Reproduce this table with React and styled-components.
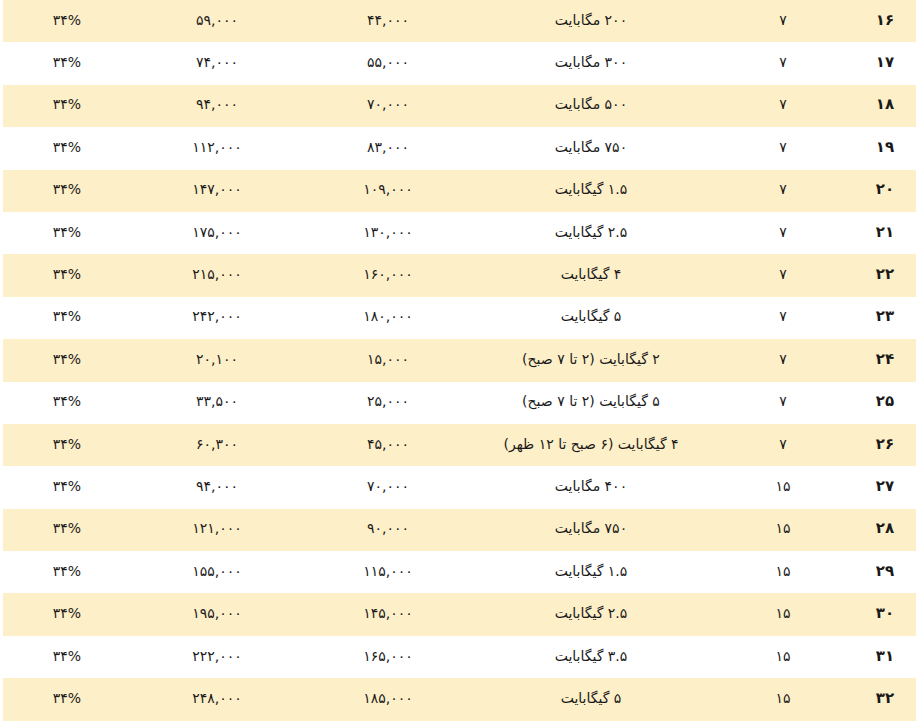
import styled, { createGlobalStyle } from "styled-components";

const GlobalStyle = createGlobalStyle`
  body {
    margin: 0;
    background: #ffffff;
    font-family: "DejaVu Sans", "Noto Sans", sans-serif;
  }
`;

const Table = styled.table`
  direction: rtl;
  width: 910px;
  margin-left: 3px;
  border-collapse: collapse;
  table-layout: fixed;
  color: #1a1a1a;
  font-size: 14px;
`;

const Row = styled.tr`
  height: 42.4px;
  background: ${({ $striped }) => ($striped ? "#fdefc8" : "#ffffff")};
`;

const Cell = styled.td`
  width: ${({ $width }) => $width}px;
  padding: 0 ${({ $padRight }) => $padRight || 0}px 3px 0;
  text-align: center;
  vertical-align: middle;
  font-weight: ${({ $bold }) => ($bold ? 700 : 400)};
  font-size: ${({ $bold }) => ($bold ? 15 : 14)}px;
  white-space: nowrap;
`;

const fa = (value) =>
  String(value).replace(/[0-9]/g, (d) => "۰۱۲۳۴۵۶۷۸۹"[d]);

const rows = [
  [16, 7, "200 مگابایت", "44,000", "59,000"],
  [17, 7, "300 مگابایت", "55,000", "74,000"],
  [18, 7, "500 مگابایت", "70,000", "94,000"],
  [19, 7, "750 مگابایت", "83,000", "112,000"],
  [20, 7, "1.5 گیگابایت", "109,000", "147,000"],
  [21, 7, "2.5 گیگابایت", "130,000", "175,000"],
  [22, 7, "4 گیگابایت", "160,000", "215,000"],
  [23, 7, "5 گیگابایت", "180,000", "242,000"],
  [24, 7, "2 گیگابایت (2 تا 7 صبح)", "15,000", "20,100"],
  [25, 7, "5 گیگابایت (2 تا 7 صبح)", "25,000", "33,500"],
  [26, 7, "4 گیگابایت (6 صبح تا 12 ظهر)", "45,000", "60,300"],
  [27, 15, "400 مگابایت", "70,000", "94,000"],
  [28, 15, "750 مگابایت", "90,000", "121,000"],
  [29, 15, "1.5 گیگابایت", "115,000", "155,000"],
  [30, 15, "2.5 گیگابایت", "145,000", "195,000"],
  [31, 15, "3.5 گیگابایت", "165,000", "222,000"],
  [32, 15, "5 گیگابایت", "185,000", "248,000"],
];

const App = () => {
  return (
    <>
      <GlobalStyle />
      <Table>
        <tbody>
          {rows.map(([id, days, volume, price, total], index) => (
            <Row key={id} $striped={index % 2 === 0}>
              <Cell $width={56} $padRight={6} $bold>
                {fa(id)}
              </Cell>
              <Cell $width={148}>{fa(days)}</Cell>
              <Cell $width={236}>{fa(volume)}</Cell>
              <Cell $width={170}>{fa(price)}</Cell>
              <Cell $width={172}>{fa(total)}</Cell>
              <Cell $width={128}>{fa("34")}%</Cell>
            </Row>
          ))}
        </tbody>
      </Table>
    </>
  );
};

export default App;
